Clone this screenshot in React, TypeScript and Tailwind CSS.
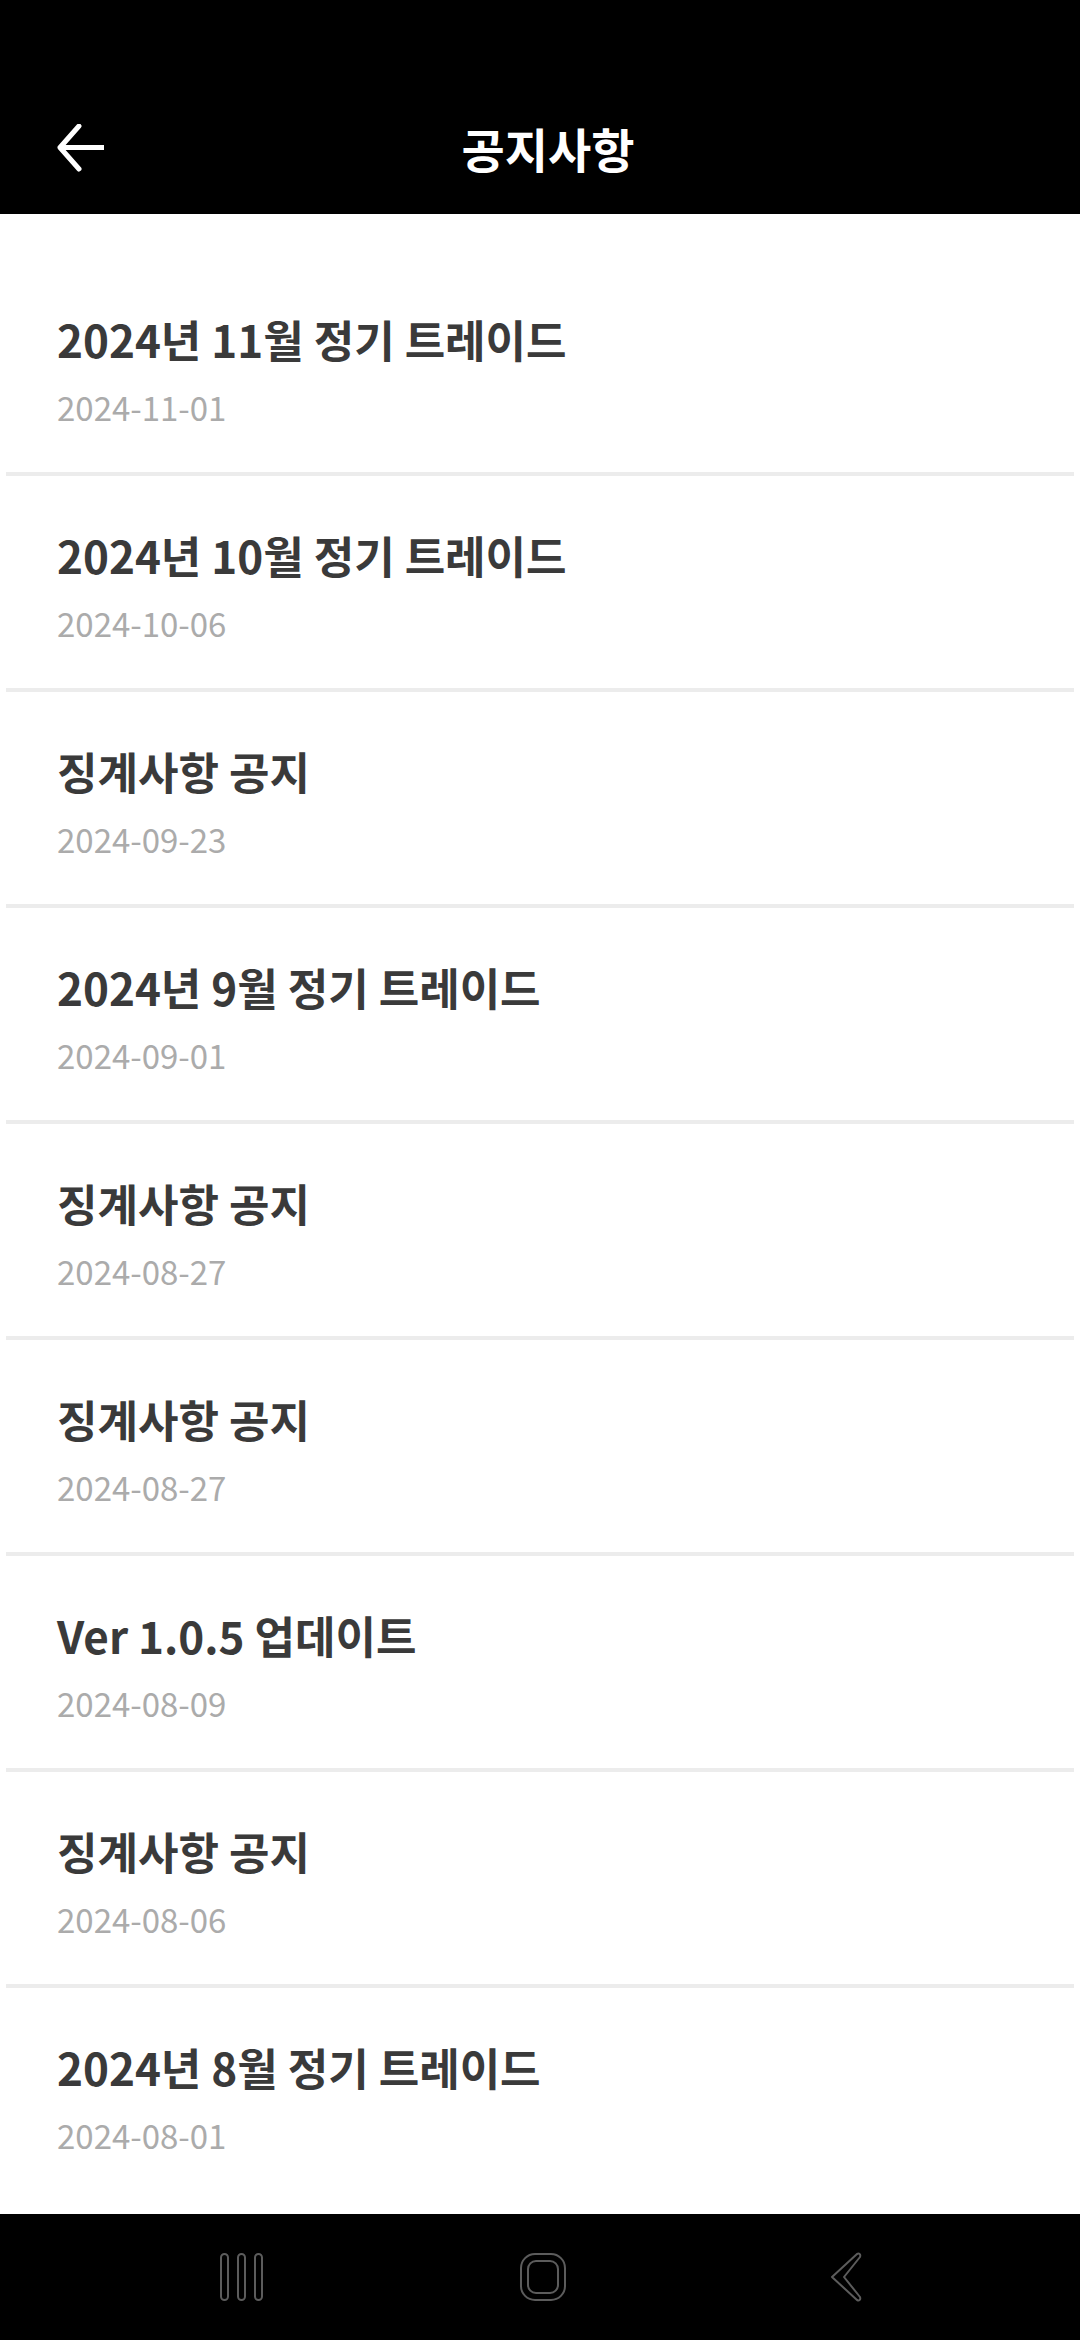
import React from "react";

const notices = [
  { title: "2024년 11월 정기 트레이드", date: "2024-11-01" },
  { title: "2024년 10월 정기 트레이드", date: "2024-10-06" },
  { title: "징계사항 공지", date: "2024-09-23" },
  { title: "2024년 9월 정기 트레이드", date: "2024-09-01" },
  { title: "징계사항 공지", date: "2024-08-27" },
  { title: "징계사항 공지", date: "2024-08-27" },
  { title: "Ver 1.0.5 업데이트", date: "2024-08-09" },
  { title: "징계사항 공지", date: "2024-08-06" },
  { title: "2024년 8월 정기 트레이드", date: "2024-08-01" },
];

function BackArrow() {
  return (
    <svg width="50" height="48" viewBox="0 0 50 48" fill="none">
      <path d="M48 23.5H6" stroke="white" strokeWidth="5" />
      <path d="M23 2L4 23.5L23 45" stroke="white" strokeWidth="5" strokeLinecap="round" strokeLinejoin="round" />
    </svg>
  );
}

function NavBar() {
  return (
    <div className="h-[126px] shrink-0 bg-black flex items-center pl-[219px]">
      {/* recent apps */}
      <svg width="46" height="48" viewBox="0 0 46 48" fill="none" stroke="#5c5c5c" strokeWidth="2">
        <rect x="2" y="1" width="7" height="46" rx="3.5" />
        <rect x="19" y="1" width="7" height="46" rx="3.5" />
        <rect x="36" y="1" width="7" height="46" rx="3.5" />
      </svg>
      {/* home */}
      <svg className="ml-[254px]" width="48" height="48" viewBox="0 0 48 48" fill="none" stroke="#5c5c5c" strokeWidth="2">
        <rect x="2" y="1" width="44" height="46" rx="14" />
        <rect x="9" y="8" width="30" height="32" rx="8" />
      </svg>
      {/* back */}
      <svg className="ml-[262px]" width="34" height="50" viewBox="0 0 34 50" fill="none" stroke="#5c5c5c" strokeWidth="2" strokeLinejoin="round">
        <path d="M28 2 C30 1 32 2 31 5 L15 25 L31 45 C32 48 30 49 28 48 L3 25 Z" />
      </svg>
    </div>
  );
}

export default function App() {
  return (
    <div
      className="w-[1080px] h-[2340px] flex flex-col bg-white overflow-hidden"
      style={{ fontFamily: '"Noto Sans CJK KR", "Noto Sans", sans-serif' }}
    >
      {/* 헤더 */}
      <header className="h-[214px] shrink-0 bg-black flex items-end">
        <div className="relative w-full h-[134px] flex items-center justify-center pl-[16px]">
          <button className="absolute left-[56px] top-[44px]">
            <BackArrow />
          </button>
          <h1 className="text-[47px] font-bold text-white leading-none">공지사항</h1>
        </div>
      </header>

      {/* 목록 */}
      <div className="flex-1 overflow-hidden pt-[46px]">
        {notices.map((n, i) => (
          <div key={i}>
            <div className="px-[57px] pt-[50px] pb-[42px]">
              <p className="text-[44px] font-bold text-[#3a3a3a] leading-[59px]">{n.title}</p>
              <p className="mt-[15px] text-[33px] text-[#ababab] leading-[46px]">{n.date}</p>
            </div>
            {i < notices.length - 1 && <div className="mx-[6px] h-[4px] bg-[#ececec]" />}
          </div>
        ))}
      </div>

      <NavBar />
    </div>
  );
}
